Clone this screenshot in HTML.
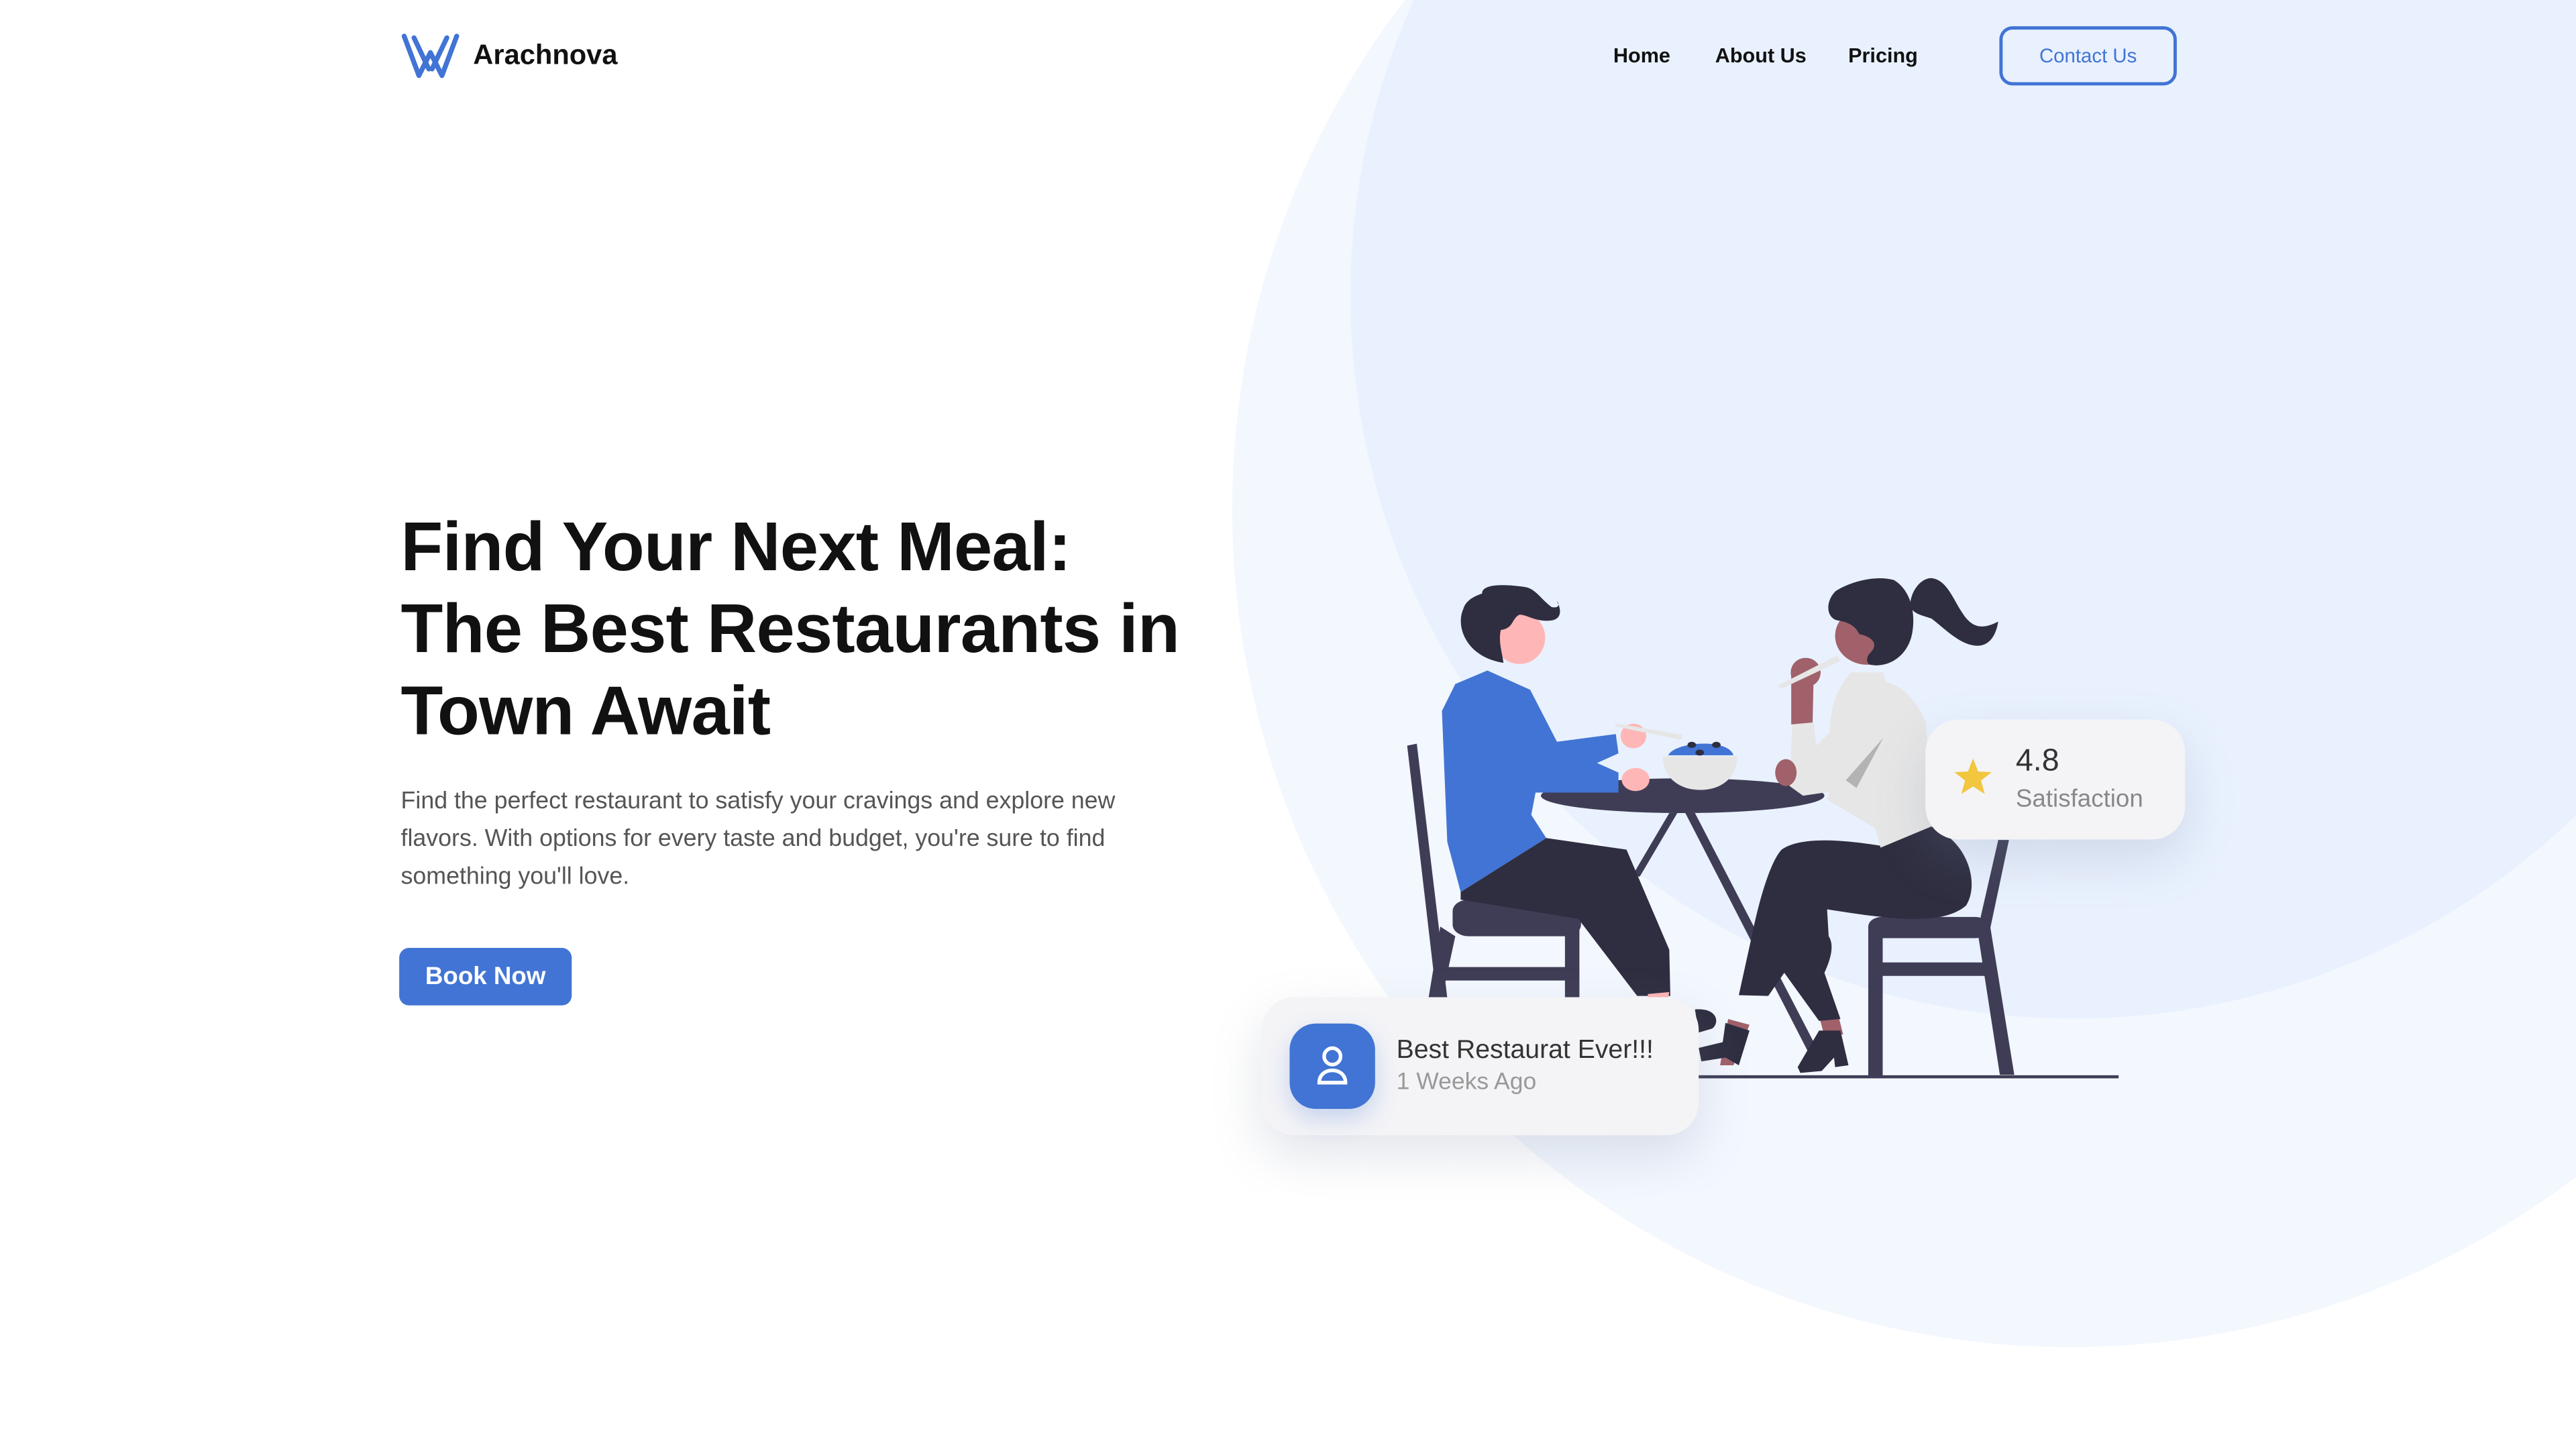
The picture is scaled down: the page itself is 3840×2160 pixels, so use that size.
<!DOCTYPE html>
<html><head><meta charset="utf-8"><style>
*{margin:0;padding:0;box-sizing:border-box}
html,body{width:3840px;height:2160px;overflow:hidden;background:#fff}
#w{position:absolute;left:0;top:0;width:1568px;height:882px;transform:scale(2.44898);transform-origin:0 0;font-family:"Liberation Sans",sans-serif;overflow:hidden}
.c1{position:absolute;left:750px;top:-200px;width:1020px;height:1020px;border-radius:50%;background:#f3f7fe}
.c2{position:absolute;left:822px;top:-260px;width:880px;height:880px;border-radius:50%;background:#e9f1fe}
.abs{position:absolute}
.nav{font-size:12.5px;font-weight:bold;color:#111;top:27px}
h1{position:absolute;left:244px;top:308px;font-size:42px;line-height:50px;font-weight:bold;color:#111;letter-spacing:-0.3px}
p.d{position:absolute;left:244px;top:477px;width:475px;font-size:14.6px;line-height:23px;color:#555}
.card{position:absolute;background:#f4f4f7;border-radius:20px;box-shadow:0 12px 30px rgba(120,130,160,.22)}
</style></head><body><div id="w">
<div class="c1"></div><div class="c2"></div>

<svg class="abs" style="left:244px;top:20px" width="36" height="29" viewBox="0 0 36 29">
<g stroke="#4174d4" stroke-width="3" fill="none" stroke-linecap="round" stroke-linejoin="round">
<path d="M2 2 L11 26 L18 12 L25 26 L34 2"/><path d="M8 3 L17 22 M28 3 L19 22"/></g></svg>
<div class="abs" style="left:288px;top:24px;font-size:17px;font-weight:bold;color:#111">Arachnova</div>

<div class="abs nav" style="left:982px">Home</div>
<div class="abs nav" style="left:1044px">About Us</div>
<div class="abs nav" style="left:1125px">Pricing</div>
<div class="abs" style="left:1217px;top:16px;width:108px;height:36px;border:2px solid #4174d4;border-radius:8px;color:#4174d4;font-size:12px;text-align:center;line-height:32px">Contact Us</div>

<h1>Find Your Next Meal:<br>The Best Restaurants in<br>Town Await</h1>
<p class="d">Find the perfect restaurant to satisfy your cravings and explore new flavors. With options for every taste and budget, you're sure to find something you'll love.</p>
<div class="abs" style="left:243px;top:577px;width:105px;height:35px;background:#4174d4;border-radius:6px;color:#fff;font-size:15px;font-weight:bold;text-align:center;line-height:35px">Book Now</div>

<svg class="abs" style="left:0;top:0" width="1568" height="882" viewBox="0 0 1568 882">
<g transform="translate(837,339) scale(0.3256,0.2344)">
<rect x="600" y="1346" width="790" height="8" fill="#3f3d56"/>
<path d="M60 490 L78 485 L135 1145 L115 1145Z" fill="#3f3d56"/>
<path d="M122 960 L100 1145 L125 1145 L150 985Z" fill="#3f3d56"/>
<rect x="145" y="890" width="240" height="95" rx="30" fill="#3f3d56"/>
<rect x="130" y="1065" width="250" height="35" fill="#3f3d56"/>
<rect x="355" y="960" width="27" height="185" fill="#3f3d56"/>
<path d="M550 665 L565 665 L495 830 L480 830Z" fill="#3f3d56"/>
<path d="M580 665 L598 665 L835 1300 L815 1300Z" fill="#3f3d56"/>
<ellipse cx="575" cy="620" rx="265" ry="45" fill="#3f3d56"/>
<path d="M160 870 L320 730 L470 760 L550 1020 L552 1140 L490 1140 L380 940 L160 890Z" fill="#2f2e41"/>
<path d="M510 1135 L550 1130 L548 1145 L510 1145Z" fill="#ffb6b6"/>
<path d="M210 295 L290 345 L340 480 L450 460 L455 510 L415 535 L455 560 L455 612 L300 612 L292 670 L320 730 L160 870 L135 740 L125 400 L150 330Z" fill="#4174d4"/>
<ellipse cx="483" cy="465" rx="24" ry="32" fill="#ffb6b6"/>
<ellipse cx="487" cy="578" rx="26" ry="30" fill="#ffb6b6"/>
<path d="M450 432 L575 462 L572 475 L448 440Z" fill="#e6e6e6"/>
<ellipse cx="270" cy="210" rx="48" ry="68" fill="#ffb6b6"/>
<path d="M240 275 C170 260 150 180 165 135 C170 110 190 100 200 95 C200 70 240 70 280 78 C300 82 310 110 330 130 C345 135 345 120 340 115 C348 135 350 160 330 165 C300 170 285 150 270 150 C255 160 260 185 235 190 C230 220 238 250 240 275Z" fill="#2f2e41"/>
<path d="M548 515 C560 480 660 470 670 515Z" fill="#4174d4"/>
<circle cx="592" cy="488" r="8" fill="#2f2e41"/><circle cx="638" cy="488" r="8" fill="#2f2e41"/><circle cx="607" cy="508" r="8" fill="#2f2e41"/>
<path d="M538 518 L677 518 C677 570 650 605 608 605 C566 605 538 570 538 518Z" fill="#e6e6e6"/>
<path d="M1165 735 L1185 735 L1150 965 L1128 960Z" fill="#3f3d56"/>
<path d="M1125 960 L1150 960 L1195 1345 L1168 1345Z" fill="#3f3d56"/>
<rect x="922" y="935" width="225" height="55" rx="25" fill="#3f3d56"/>
<rect x="922" y="960" width="27" height="390" fill="#3f3d56"/>
<rect x="940" y="1053" width="200" height="35" fill="#3f3d56"/>
<path d="M660 1200 L700 1215 L670 1320 L645 1320Z" fill="#a0616a"/>
<path d="M828 1180 L865 1185 L875 1240 L840 1245Z" fill="#a0616a"/>
<path d="M760 760 C800 720 900 740 945 750 L1040 700 C1110 740 1130 850 1105 905 C1060 960 960 940 845 915 L848 985 C860 1010 850 1050 840 1080 L870 1200 L830 1205 L765 1080 L735 1140 L680 1138 L705 980 C720 880 740 790 760 760Z" fill="#2f2e41"/>
<path d="M655 1210 L700 1230 L680 1320 L655 1300 L610 1310 L605 1275 L650 1260Z" fill="#2f2e41"/>
<path d="M598 1175 C640 1170 645 1210 630 1225 L605 1235Z" fill="#2f2e41"/>
<path d="M830 1230 L870 1230 L885 1320 L860 1325 L858 1300 L835 1335 L795 1340 L790 1325Z" fill="#2f2e41"/>
<path d="M890 300 L950 300 L955 325 C1000 340 1020 400 1030 430 L1040 700 L945 755 L935 705 L845 630 L850 610 L800 620 L775 595 L780 430 L820 430 L825 490 L850 455 C850 380 870 330 890 300Z" fill="#e6e6e6"/>
<path d="M950 470 L900 600 L880 580Z" fill="#b3b3b3"/>
<path d="M778 300 L820 300 L818 430 L778 435Z" fill="#a0616a"/>
<ellipse cx="805" cy="300" rx="28" ry="38" fill="#a0616a"/>
<ellipse cx="768" cy="560" rx="20" ry="35" fill="#a0616a"/>
<path d="M752 335 L865 255 L870 270 L760 342Z" fill="#e6e6e6"/>
<ellipse cx="920" cy="205" rx="60" ry="75" fill="#a0616a"/>
<path d="M925 280 C965 290 1000 250 1005 190 C1010 140 1000 85 970 60 C930 45 880 70 860 90 C840 120 845 160 865 165 C890 170 900 185 905 200 C935 210 940 230 925 250 C918 260 918 275 925 280Z" fill="#2f2e41"/>
<path d="M1000 130 C1000 90 1020 55 1040 55 C1070 60 1080 110 1100 150 C1120 190 1140 185 1165 168 C1160 210 1145 235 1120 230 C1090 225 1060 180 1040 160 C1020 150 1010 150 1000 130Z" fill="#2f2e41"/>
</g>
</svg>

<div class="card" style="left:1172px;top:438px;width:158px;height:73px">
<svg class="abs" style="left:16px;top:22px" width="26" height="26" viewBox="0 0 24 24"><path d="M12 1.5l2.9 7.4 7.6.3-6 4.8 2.1 7.5L12 17.3l-6.6 4.2 2.1-7.5-6-4.8 7.6-.3z" fill="#f3c640"/></svg>
<div class="abs" style="left:55px;top:15px;font-size:19px;color:#333">4.8</div>
<div class="abs" style="left:55px;top:40px;font-size:15px;color:#888">Satisfaction</div>
</div>

<div class="card" style="left:768px;top:607px;width:266px;height:84px">
<div class="abs" style="left:17px;top:16px;width:52px;height:52px;background:#4174d4;border-radius:16px;box-shadow:0 6px 14px rgba(65,116,212,.25)">
<svg class="abs" style="left:15px;top:13px" width="22" height="26" viewBox="0 0 22 26"><circle cx="11" cy="7" r="5" fill="none" stroke="#fff" stroke-width="2.2"/><path d="M3 23 C3 13 19 13 19 23Z" fill="none" stroke="#fff" stroke-width="2.2"/></svg></div>
<div class="abs" style="left:82px;top:24px;font-size:16px;color:#333">Best Restaurat Ever!!!</div>
<div class="abs" style="left:82px;top:44px;font-size:14.5px;color:#999">1 Weeks Ago</div>
</div>
</div></body></html>
